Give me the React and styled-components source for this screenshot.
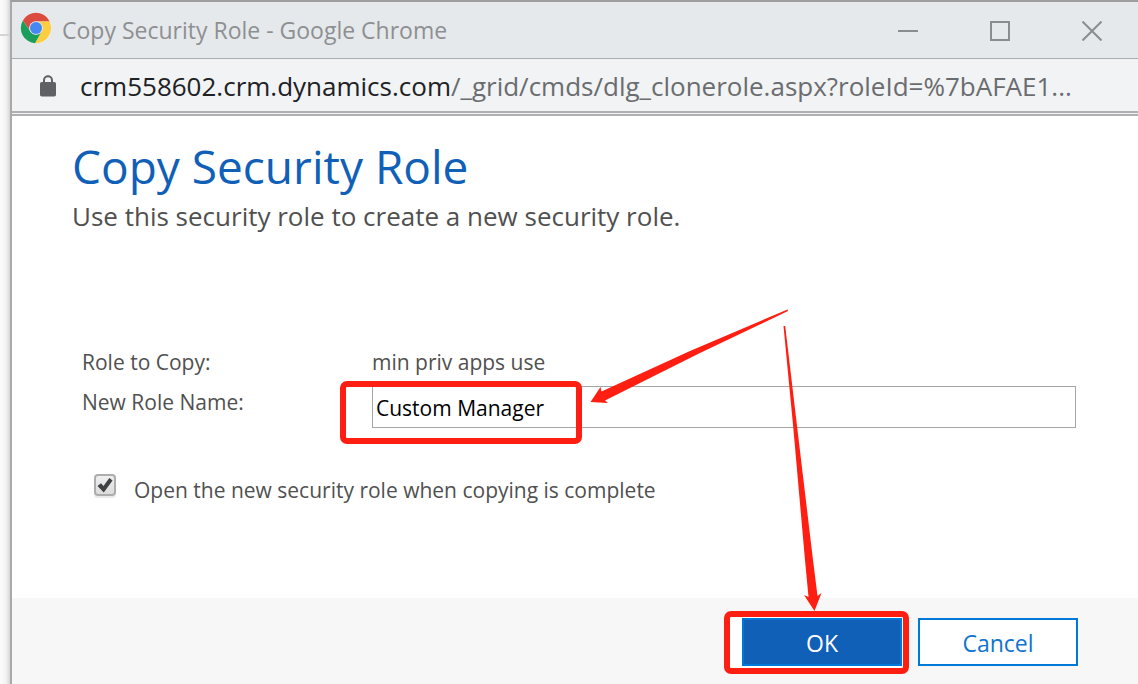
import React from 'react';
import styled, { createGlobalStyle } from 'styled-components';

const RED = '#ff1e12';

const GlobalStyle = createGlobalStyle`
    *, *::before, *::after {
        box-sizing: border-box;
    }

    body {
        margin: 0;
        background: #fff;
        color: #505050;
        font-family: "Open Sans", "Noto Sans", sans-serif;
    }

    button, input {
        font-family: inherit;
    }
`;

const Desktop = styled.div`
    position: relative;
    display: flex;
    min-height: 100vh;
    overflow: hidden;
`;

const Gutter = styled.div`
    width: 10px;
    flex: none;
    padding-top: 34px;
    background: linear-gradient(to right, #fcfcfc, #f2f2f2 60%, #d6d6d6);

    &::before {
        content: '';
        display: block;
        height: 2px;
        background: #d4d4d4;
    }
`;

const Window = styled.div`
    flex: 1;
    min-width: 0;
    display: flex;
    flex-direction: column;
    border-top: 2px solid #9e9e9e;
    border-left: 2px solid #a9a9a9;
`;

const TitleBar = styled.header`
    display: flex;
    align-items: center;
    height: 57px;
    padding: 0 0 4px 8px;
    background: #e5e9ec;
    border-bottom: 1px solid #a9adb0;
`;

const WindowTitle = styled.div`
    flex: 1;
    margin-left: 10px;
    padding-top: 4px;
    color: #8e8f91;
    font-size: 23px;
    line-height: 32px;
    white-space: nowrap;
`;

const WindowButton = styled.button`
    display: flex;
    align-items: center;
    justify-content: center;
    width: 92px;
    height: 52px;
    padding: 6px 0 0;
    border: 0;
    background: transparent;
    color: #8b8c8e;
`;

const AddressBar = styled.div`
    display: flex;
    align-items: center;
    height: 57px;
    padding: 2px 42px 0 28px;
    background: #f1f3f4;
    border-bottom: 5px double #b0b0b2;
`;

const Address = styled.div`
    flex: 1;
    min-width: 0;
    margin-left: 24px;
    overflow: hidden;
    color: #6a6c6f;
    font-size: 26px;
    line-height: 40px;
    white-space: nowrap;
`;

const Host = styled.span`
    color: #202124;
`;

const Dialog = styled.form`
    flex: 1;
    display: flex;
    flex-direction: column;
`;

const Intro = styled.div`
    padding: 18px 60px 0;
`;

const Heading = styled.h1`
    margin: 0;
    color: #1160b7;
    font-size: 46px;
    font-weight: 400;
    line-height: 64px;
`;

const Description = styled.p`
    margin: 0;
    font-size: 26px;
    line-height: 36px;
`;

const Fields = styled.div`
    display: grid;
    grid-template-columns: 290px 1fr;
    row-gap: 8px;
    margin-top: 112px;
    padding: 0 62px 0 70px;
    font-size: 21px;
    line-height: 32px;
`;

const InputBox = styled.div`
    position: relative;
`;

const NameInput = styled.input`
    display: block;
    width: 100%;
    height: 42px;
    padding: 2px 3px 0;
    border: 1px solid #a6a6a6;
    border-radius: 0;
    background: #fff;
    color: #000;
    font-size: 21px;
    outline: none;
`;

const Highlight = styled.span`
    position: absolute;
    top: ${p => p.$top}px;
    left: ${p => p.$left}px;
    width: ${p => p.$width}px;
    height: 63px;
    border: 6px solid ${RED};
    border-radius: 7px;
    pointer-events: none;
`;

const OpenOption = styled.label`
    display: flex;
    align-items: flex-start;
    margin-top: 46px;
    padding-left: 82px;
    font-size: 21px;
    line-height: 32px;
`;

const CheckBox = styled.span`
    position: relative;
    width: 22px;
    height: 22px;
    margin-right: 18px;

    svg {
        position: absolute;
        top: 0;
        left: 0;
        pointer-events: none;
    }
`;

const CheckInput = styled.input`
    appearance: none;
    display: block;
    width: 22px;
    height: 22px;
    margin: 0;
    border: 2px solid #adadad;
    border-radius: 4px;
    background: linear-gradient(#efefef, #dcdcdc);
    box-shadow: 0 2px 1px #e9e9e9;

    & + svg {
        visibility: hidden;
    }

    &:checked + svg {
        visibility: visible;
    }
`;

const Footer = styled.footer`
    display: flex;
    justify-content: flex-end;
    gap: 16px;
    height: 86px;
    margin-top: auto;
    padding: 20px 60px 0 0;
    background: #f7f7f7;
`;

const ButtonBox = styled.div`
    position: relative;
    height: 48px;
`;

const DialogButton = styled.button`
    position: relative;
    width: 160px;
    height: 48px;
    padding: 2px 0 0;
    border: 2px solid #0078d7;
    background: ${p => (p.$primary ? '#1160b7' : '#fff')};
    color: ${p => (p.$primary ? '#fff' : '#0f73d2')};
    font-size: 23px;
    line-height: 32px;
`;

const OkBackdrop = styled.span`
    position: absolute;
    top: -2px;
    left: -14px;
    width: 176px;
    height: 53px;
    background: #fff;
`;

const Arrows = styled.svg`
    position: absolute;
    top: 0;
    left: 0;
    pointer-events: none;
`;

const ChromeLogo = () => (
    <svg width="32" height="32" viewBox="0 0 32 32" aria-hidden="true">
        <circle cx="16" cy="16" r="15.2" fill="#fff" />
        <path d="M2.84 8.4A15.2 15.2 0 0 1 29.16 8.4L29.7 9.4H16A6.6 6.6 0 0 0 10.28 19.3Z" fill="#db4c3f" />
        <path d="M29.6 9.4A15.2 15.2 0 0 1 16 31.2L15 31.2L21.72 19.3A6.6 6.6 0 0 0 16 9.4Z" fill="#ffcd40" />
        <path d="M2.84 8.4L10.28 19.3A6.6 6.6 0 0 0 21.72 19.3L15 31.2A15.2 15.2 0 0 1 2.84 8.4Z" fill="#1a9f5b" />
        <circle cx="16" cy="16" r="6.8" fill="#d5dfee" />
        <circle cx="16" cy="16" r="6" fill="#4688f1" />
    </svg>
);

const LockIcon = () => (
    <svg width="16" height="22" viewBox="0 0 16 22" aria-hidden="true">
        <path d="M4 8V5.2a4 4 0 0 1 8 0V8" fill="none" stroke="#606164" strokeWidth="2" />
        <rect y="7" width="16" height="14.5" rx="1.8" fill="#606164" />
    </svg>
);

class App extends React.Component {
    constructor(props) {
        super(props);
        this.state = {
            roleName: 'Custom Manager',
            openRole: true
        };
    }

    handleNameChange = e => {
        this.setState({ roleName: e.target.value });
    }

    handleOpenChange = e => {
        this.setState({ openRole: e.target.checked });
    }

    handleSubmit = e => {
        e.preventDefault();
    }

    render() {
        return (
            <Desktop>
                <GlobalStyle />
                <Gutter />
                <Window>
                    <TitleBar>
                        <ChromeLogo />
                        <WindowTitle>Copy Security Role - Google Chrome</WindowTitle>
                        <WindowButton type="button" aria-label="Minimize">
                            <svg width="20" height="20">
                                <path d="M0 10H20" stroke="currentColor" strokeWidth="2" />
                            </svg>
                        </WindowButton>
                        <WindowButton type="button" aria-label="Maximize">
                            <svg width="20" height="20">
                                <rect x="1" y="1" width="18" height="18" fill="none" stroke="currentColor" strokeWidth="2" />
                            </svg>
                        </WindowButton>
                        <WindowButton type="button" aria-label="Close">
                            <svg width="20" height="20">
                                <path d="M0.5 0.5L19.5 19.5M19.5 0.5L0.5 19.5" stroke="currentColor" strokeWidth="2" />
                            </svg>
                        </WindowButton>
                    </TitleBar>
                    <AddressBar>
                        <LockIcon />
                        <Address>
                            <Host>crm558602.crm.dynamics.com</Host>/_grid/cmds/dlg_clonerole.aspx?roleId=%7bAFAE1...
                        </Address>
                    </AddressBar>
                    <Dialog onSubmit={this.handleSubmit}>
                        <Intro>
                            <Heading>Copy Security Role</Heading>
                            <Description>Use this security role to create a new security role.</Description>
                        </Intro>
                        <Fields>
                            <span>Role to Copy:</span>
                            <span>min priv apps use</span>
                            <label htmlFor="roleName">New Role Name:</label>
                            <InputBox>
                                <NameInput
                                    type="text"
                                    id="roleName"
                                    value={this.state.roleName}
                                    onChange={this.handleNameChange} />
                                <Highlight $top={-5} $left={-32} $width={242} />
                            </InputBox>
                        </Fields>
                        <OpenOption>
                            <CheckBox>
                                <CheckInput
                                    type="checkbox"
                                    checked={this.state.openRole}
                                    onChange={this.handleOpenChange} />
                                <svg width="22" height="22">
                                    <path d="M3.5 12L7 9.2L9.5 12L15.3 4L18.6 6.6L9.8 18.5Z" fill="#404145" />
                                </svg>
                            </CheckBox>
                            Open the new security role when copying is complete
                        </OpenOption>
                        <Footer>
                            <ButtonBox>
                                <OkBackdrop />
                                <DialogButton type="submit" $primary>OK</DialogButton>
                                <Highlight $top={-7} $left={-18} $width={185} />
                            </ButtonBox>
                            <DialogButton type="button">Cancel</DialogButton>
                        </Footer>
                    </Dialog>
                </Window>
                <Arrows width="1138" height="684" fill={RED} aria-hidden="true">
                    <path d="M787.5 309.5L788 311L700 353L605 400.5L608 403L590.5 402L600.5 387L601.5 391.5L690 351Z" />
                    <path d="M783.5 326H785.2L797.5 430L813 560L817.5 596L821.5 593L814.5 611L804 595L808.5 597L805 560L793.5 430Z" />
                </Arrows>
            </Desktop>
        );
    }
}

export default App;
